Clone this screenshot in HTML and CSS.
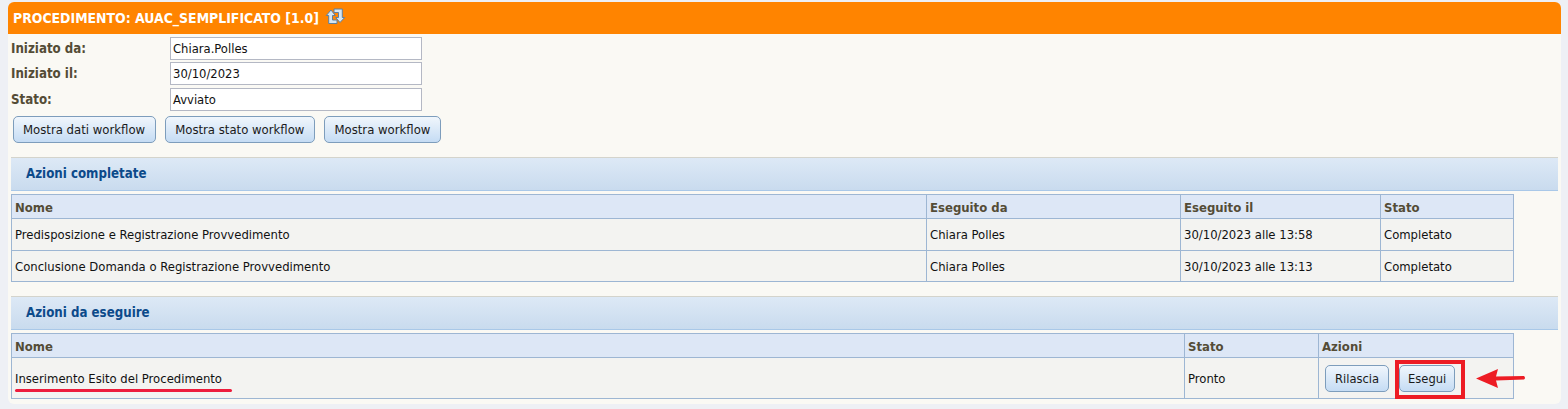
FILE: index.html
```html
<!DOCTYPE html>
<html lang="it">
<head>
  <meta charset="UTF-8">
  <meta name="viewport" content="width=device-width, initial-scale=1.0">
  <title>Procedimento</title>
  <link rel="stylesheet" href="styles.css">
</head>
<body>

<div class="panel">
  <div class="title-bar">
    <span>PROCEDIMENTO: AUAC_SEMPLIFICATO [1.0]</span>
    <svg class="refresh" width="21" height="18" viewBox="0 0 20 18">
      <path d="M5.5 2 L0.8 7.5 H3.2 V15.5 H11.5 V12 H7 V7.5 H9.8 Z" fill="#d5e6f3" stroke="#5f7f9c" stroke-width="1"/>
      <path d="M14.5 14.5 L19.2 9.5 H16.8 V1 H8.5 V4.5 H13 V9.5 H10.2 Z" fill="#d5e6f3" stroke="#5f7f9c" stroke-width="1"/>
    </svg>
  </div>

  <div class="info">
    <div class="info-row"><label>Iniziato da:</label><div class="field">Chiara.Polles</div></div>
    <div class="info-row"><label>Iniziato il:</label><div class="field">30/10/2023</div></div>
    <div class="info-row"><label>Stato:</label><div class="field">Avviato</div></div>
  </div>

  <div class="buttons">
    <button class="btn">Mostra dati workflow</button>
    <button class="btn">Mostra stato workflow</button>
    <button class="btn">Mostra workflow</button>
  </div>

  <h2 class="section">Azioni completate</h2>
  <table class="grid">
    <colgroup><col class="c-nome"><col class="c-da"><col class="c-il"><col></colgroup>
    <tr class="head"><th>Nome</th><th>Eseguito da</th><th>Eseguito il</th><th>Stato</th></tr>
    <tr><td>Predisposizione e Registrazione Provvedimento</td><td>Chiara Polles</td><td>30/10/2023 alle 13:58</td><td>Completato</td></tr>
    <tr class="last"><td>Conclusione Domanda o Registrazione Provvedimento</td><td>Chiara Polles</td><td>30/10/2023 alle 13:13</td><td>Completato</td></tr>
  </table>

  <h2 class="section">Azioni da eseguire</h2>
  <table class="grid">
    <colgroup><col class="c-nome2"><col class="c-stato2"><col></colgroup>
    <tr class="head"><th>Nome</th><th>Stato</th><th>Azioni</th></tr>
    <tr class="tall">
      <td><span class="underlined">Inserimento Esito del Procedimento</span></td>
      <td>Pronto</td>
      <td>
        <div class="row-actions">
          <button class="btn">Rilascia</button>
          <span class="highlight"><button class="btn">Esegui</button></span>
          <svg class="arrow" width="50" height="19" viewBox="0 0 50 19">
            <path d="M0 9.5 L22 0 L20 7.5 L48 7 Q50 9 48 10.5 L20 11.5 L22 19 Z" fill="#ed1c24"/>
          </svg>
        </div>
      </td>
    </tr>
  </table>
</div>

</body>
</html>
```

FILE: styles.css
```css
body {
  margin: 0;
  padding: 2px 7px 5px 8px;
  background-color: #eef0f5;
  font-family: "DejaVu Sans Condensed", "DejaVu Sans", Verdana, sans-serif;
  font-stretch: condensed;
  font-size: 13px;
  color: #111;
}
.panel {
  height: 402px;
  box-sizing: border-box;
  background-color: #faf9f4;
  border-radius: 6px;
  overflow: hidden;
}
.title-bar {
  display: flex;
  align-items: center;
  gap: 6px;
  height: 32px;
  padding-left: 5px;
  background-color: #ff8400;
  color: #fff;
  font-size: 13.9px;
  font-weight: bold;
}
.refresh {
  margin-top: -3px;
}
.info {
  padding: 3px 0 0 3px;
}
.info-row {
  display: flex;
  height: 26px;
}
.info-row:first-child {
  height: 25px;
}
.info-row label {
  width: 159px;
  font-size: 13.2px;
  font-weight: bold;
  color: #544c36;
  line-height: 23px;
}
.field {
  box-sizing: border-box;
  width: 252px;
  height: 23px;
  line-height: 22px;
  padding-left: 2px;
  border: 1px solid #b4b8c4;
  background-color: #fff;
  font-size: 12.9px;
}
.buttons {
  display: flex;
  gap: 9px;
  margin: 2px 0 0 5px;
}
.btn {
  height: 27px;
  padding: 0 10px 0 9px;
  border: 1px solid #7d9dbc;
  border-radius: 5px;
  background: linear-gradient(#f0f6fc, #c5dcf4);
  font-family: inherit;
  font-stretch: inherit;
  font-size: 13px;
  color: #1a1a1a;
}
.section {
  margin: 14px 3px 3px 3px;
  height: 34px;
  line-height: 32px;
  box-sizing: border-box;
  padding-left: 15px;
  border-top: 1px solid #d4d4cc;
  border-bottom: 1px solid #a9c8e8;
  background: linear-gradient(#dde9f6, #c9dbee);
  color: #0c4a8a;
  font-size: 13.2px;
  font-weight: bold;
}
.grid {
  width: 1503px;
  margin-left: 3px;
  border-collapse: collapse;
  table-layout: fixed;
  background-color: #f3f3f1;
}
.grid th,
.grid td {
  padding: 0 3px;
  border: 1px solid #9db6d3;
  text-align: left;
  font-size: 12.95px;
  font-weight: normal;
}
.grid th {
  padding-top: 1px;
  background-color: #dde7f6;
  color: #544c36;
  font-size: 13px;
  font-weight: bold;
}
.grid tr {
  height: 32px;
}
.grid .head {
  height: 24px;
}
.grid .last {
  height: 31px;
}
.grid .tall {
  height: 41px;
}
.c-nome { width: 915px; }
.c-da { width: 254px; }
.c-il { width: 200px; }
.c-nome2 { width: 1173px; }
.c-stato2 { width: 134px; }
.underlined {
  position: relative;
}
.underlined::after {
  content: "";
  position: absolute;
  left: 0;
  width: 217px;
  bottom: -6px;
  height: 3px;
  border-radius: 2px;
  background-color: #ed1c3c;
}
.row-actions {
  display: flex;
  align-items: center;
  gap: 10px;
  padding-left: 3px;
  position: relative;
}
.row-actions .btn {
  padding: 0 9px;
  font-size: 12.8px;
}
.highlight {
  position: relative;
  display: flex;
}
.row-actions .highlight .btn {
  padding: 0 8px;
}
.highlight::after {
  content: "";
  position: absolute;
  inset: -5px -10px -7px -4px;
  border: 4px solid #ed1c24;
}
.arrow {
  position: absolute;
  left: 154px;
  top: 4px;
}
```
